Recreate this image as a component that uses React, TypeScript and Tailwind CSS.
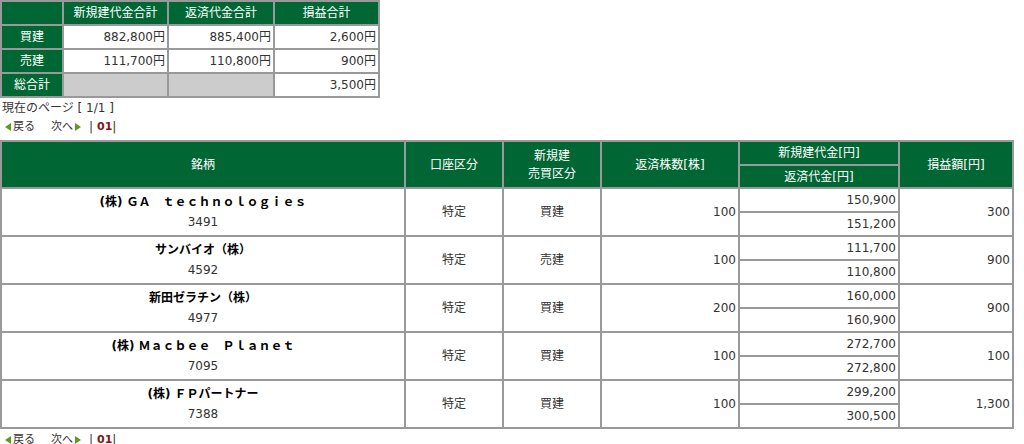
import type { FC } from 'react';

const font = { fontFamily: '"DejaVu Sans", "Noto Sans CJK JP", sans-serif' };

const th = 'border border-[#999] bg-[#006633] text-white font-normal text-center';
const td = 'border border-[#999] bg-white text-[#333]';

type Trade = {
	name: string;
	code: string;
	side: string;
	qty: string;
	open: string;
	close: string;
	pl: string;
};

const trades: Trade[] = [
	{ name: '(株) ＧＡ　ｔｅｃｈｎｏｌｏｇｉｅｓ', code: '3491', side: '買建', qty: '100', open: '150,900', close: '151,200', pl: '300' },
	{ name: 'サンバイオ（株）', code: '4592', side: '売建', qty: '100', open: '111,700', close: '110,800', pl: '900' },
	{ name: '新田ゼラチン（株）', code: '4977', side: '買建', qty: '200', open: '160,000', close: '160,900', pl: '900' },
	{ name: '(株) Ｍａｃｂｅｅ　Ｐｌａｎｅｔ', code: '7095', side: '買建', qty: '100', open: '272,700', close: '272,800', pl: '100' },
	{ name: '(株) ＦＰパートナー', code: '7388', side: '買建', qty: '100', open: '299,200', close: '300,500', pl: '1,300' },
];

const Tri: FC<{ dir: 'l' | 'r' }> = ({ dir }) => (
	<svg width="6" height="8" viewBox="0 0 6 8" className="inline-block">
		<polygon points={dir === 'l' ? '6,0 0,4 6,8' : '0,0 6,4 0,8'} fill="#5f9a1c" />
	</svg>
);

const Pager: FC = () => (
	<div className="flex items-center h-[20px] pl-[5px] text-[11px] text-[#333]">
		<Tri dir="l" />
		<span className="ml-[2px]">戻る</span>
		<span className="ml-[16px]">次へ</span>
		<span className="ml-[2px]"><Tri dir="r" /></span>
		<span className="ml-[8px] text-[12px]">|</span>
		<span className="ml-[4px] font-bold text-[#7a1a1a]">01</span>
		<span className="text-[12px]">|</span>
	</div>
);

export default function App() {
	return (
		<div className="w-[1024px] h-[444px] overflow-hidden bg-white text-[12px]" style={font}>
			<table className="border-separate border-spacing-0 border border-[#999] w-[380px]">
				<tbody>
					<tr className="h-[24px]">
						<th className={`${th} w-[62px]`}></th>
						<th className={`${th} w-[105px]`}>新規建代金合計</th>
						<th className={`${th} w-[106px]`}>返済代金合計</th>
						<th className={th}>損益合計</th>
					</tr>
					<tr className="h-[24px]">
						<th className={th}>買建</th>
						<td className={`${td} text-right pr-[2px]`}>882,800円</td>
						<td className={`${td} text-right pr-[2px]`}>885,400円</td>
						<td className={`${td} text-right pr-[2px]`}>2,600円</td>
					</tr>
					<tr className="h-[24px]">
						<th className={th}>売建</th>
						<td className={`${td} text-right pr-[2px]`}>111,700円</td>
						<td className={`${td} text-right pr-[2px]`}>110,800円</td>
						<td className={`${td} text-right pr-[2px]`}>900円</td>
					</tr>
					<tr className="h-[24px]">
						<th className={th}>総合計</th>
						<td className="border border-[#999] bg-[#cccccc]"></td>
						<td className="border border-[#999] bg-[#cccccc]"></td>
						<td className={`${td} text-right pr-[2px]`}>3,500円</td>
					</tr>
				</tbody>
			</table>
			<div className="pl-[2px] pt-[2px] h-[19px] text-[#333] leading-[17px]">現在のページ [ 1/1 ]</div>
			<Pager />
			<table className="mt-[3px] border-separate border-spacing-0 border border-[#999] w-[1014px]">
				<tbody>
					<tr className="h-[24px]">
						<th rowSpan={2} className={`${th} w-[404px]`}>銘柄</th>
						<th rowSpan={2} className={`${th} w-[98px]`}>口座区分</th>
						<th rowSpan={2} className={`${th} w-[98px] leading-[18px]`}>新規建<br />売買区分</th>
						<th rowSpan={2} className={`${th} w-[138px]`}>返済株数[株]</th>
						<th className={`${th} w-[160px]`}>新規建代金[円]</th>
						<th rowSpan={2} className={th}>損益額[円]</th>
					</tr>
					<tr className="h-[23px]">
						<th className={th}>返済代金[円]</th>
					</tr>
					{trades.map((t) => [
						<tr key={t.code + 'a'} className="h-[24px]">
							<td rowSpan={2} className={`${td} text-center leading-[20px]`}>
								<div className="font-bold text-black">{t.name}</div>
								<div>{t.code}</div>
							</td>
							<td rowSpan={2} className={`${td} text-center`}>特定</td>
							<td rowSpan={2} className={`${td} text-center`}>{t.side}</td>
							<td rowSpan={2} className={`${td} text-right pr-[2px]`}>{t.qty}</td>
							<td className={`${td} text-right pr-[2px]`}>{t.open}</td>
							<td rowSpan={2} className={`${td} text-right pr-[2px]`}>{t.pl}</td>
						</tr>,
						<tr key={t.code + 'b'} className="h-[24px]">
							<td className={`${td} text-right pr-[2px]`}>{t.close}</td>
						</tr>,
					])}
				</tbody>
			</table>
			<div className="mt-[1px]">
				<Pager />
			</div>
		</div>
	);
}
